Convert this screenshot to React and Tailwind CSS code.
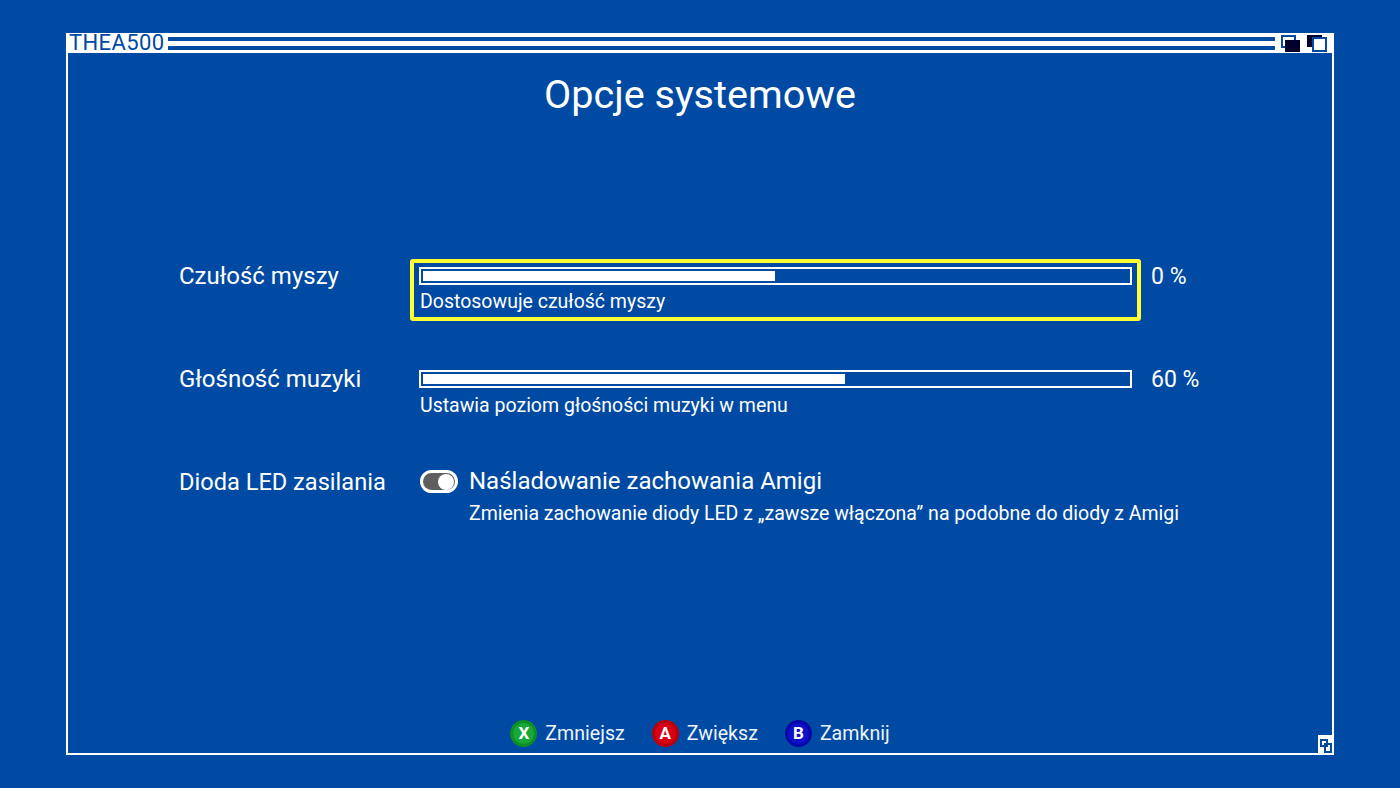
import React from 'react';

const Slider = ({ fill, hint, gap }) => (
    <div className="w-[713px]">
        <div className="h-[18px] border-2 border-white p-[2px]">
            <div className="h-full bg-white" style={{ width: fill }} />
        </div>
        <div className={`pl-[1px] text-[19.5px] leading-[28px] text-white ${gap}`}>{hint}</div>
    </div>
);

const PadButton = ({ letter, outer, inner, label }) => (
    <div className="flex items-center gap-[8px]">
        <div className={`flex h-[27px] w-[27px] items-center justify-center rounded-full ${outer}`}>
            <div className={`flex h-[21px] w-[21px] items-center justify-center rounded-full text-[17px] font-bold text-white ${inner}`}>
                {letter}
            </div>
        </div>
        <span className="text-[19.6px] leading-[26px] text-[#eef4fb]">{label}</span>
    </div>
);

const Gadget = ({ front }) => (
    <svg width="26" height="20" viewBox="0 0 26 20" className="shrink-0 bg-white">
        {front ? (
            <>
                <rect x="5" y="3" width="13" height="11" fill="none" stroke="#004aa3" strokeWidth="2" />
                <rect x="8" y="7" width="15" height="12" fill="#00002a" />
            </>
        ) : (
            <>
                <rect x="3" y="2" width="15" height="12" fill="#00002a" />
                <rect x="9" y="5" width="13" height="13" fill="#ffffff" stroke="#004aa3" strokeWidth="2" />
            </>
        )}
    </svg>
);

export default function App() {
    return (
        <div className="h-[788px] w-[1400px] bg-[#004aa3] px-[66px] pt-[33px] font-['Roboto',sans-serif]">
            <div className="relative flex h-[722px] flex-col border-2 border-t-0 border-white">
                <div className="-mx-[1px] flex h-[20px] items-stretch bg-white">
                    <div className="px-[2px] text-[22px] leading-[20px] tracking-[0.4px] text-[#004aa3]">THEA500</div>
                    <div className="ml-[1px] flex flex-1 flex-col justify-center gap-[5px] pr-[2px]">
                        <div className="h-[4px] bg-[#004aa3]" />
                        <div className="h-[4px] bg-[#004aa3]" />
                    </div>
                    <Gadget front />
                    <div className="w-[1px]" />
                    <Gadget />
                    <div className="w-[3px]" />
                </div>

                <h1 className="mt-[18px] text-center text-[39.6px] leading-[48px] text-white">Opcje systemowe</h1>

                <div className="mt-[140px] flex flex-col pl-[111px]">
                    <div className="flex items-start">
                        <div className="w-[231px] pt-[2px] text-[24px] leading-[30px] text-white">Czułość myszy</div>
                        <div className="rounded-[3px] border-[4px] border-[#ffff33] px-[5px] pt-[4px] pb-[1px]">
                            <Slider fill="49.9%" hint="Dostosowuje czułość myszy" gap="mt-[3px]" />
                        </div>
                        <div className="ml-[10px] pt-[3px] text-[23px] leading-[30px] text-white">0 %</div>
                    </div>

                    <div className="mt-[49px] flex items-start">
                        <div className="-mt-[6px] w-[240px] text-[24px] leading-[30px] text-white">Głośność muzyki</div>
                        <Slider fill="59.9%" hint="Ustawia poziom głośności muzyki w menu" gap="mt-[4px]" />
                        <div className="-mt-[5px] ml-[19px] text-[23px] leading-[30px] text-white">60 %</div>
                    </div>

                    <div className="mt-[46px] flex items-start">
                        <div className="mt-[1px] w-[241px] text-[23.6px] leading-[30px] text-white">Dioda LED zasilania</div>
                        <div className="mt-[4px] flex h-[23px] w-[38px] items-center justify-end rounded-full border-[3px] border-white bg-[#5f5f5f] pr-[1px]">
                            <div className="h-[16px] w-[16px] rounded-full bg-white" />
                        </div>
                        <div className="ml-[11px]">
                            <div className="text-[24px] leading-[30px] text-white">Naśladowanie zachowania Amigi</div>
                            <div className="mt-[4px] text-[19.5px] leading-[28px] text-white">Zmienia zachowanie diody LED z „zawsze włączona” na podobne do diody z Amigi</div>
                        </div>
                    </div>
                </div>

                <div className="mt-auto mb-[6px] flex justify-center gap-[27px]">
                    <PadButton letter="X" outer="bg-[#0e8f25]" inner="bg-[#18a838]" label="Zmniejsz" />
                    <PadButton letter="A" outer="bg-[#b8000c]" inner="bg-[#d80014]" label="Zwiększ" />
                    <PadButton letter="B" outer="bg-[#0808a8]" inner="bg-[#1010c8]" label="Zamknij" />
                </div>

                <svg width="16" height="20" viewBox="0 0 16 20" className="absolute right-[-2px] bottom-[-2px] bg-white">
                    <rect x="3" y="5" width="6" height="6" fill="none" stroke="#004aa3" strokeWidth="2" />
                    <rect x="7" y="9" width="6" height="8" fill="none" stroke="#004aa3" strokeWidth="2" />
                </svg>
            </div>
        </div>
    );
}
